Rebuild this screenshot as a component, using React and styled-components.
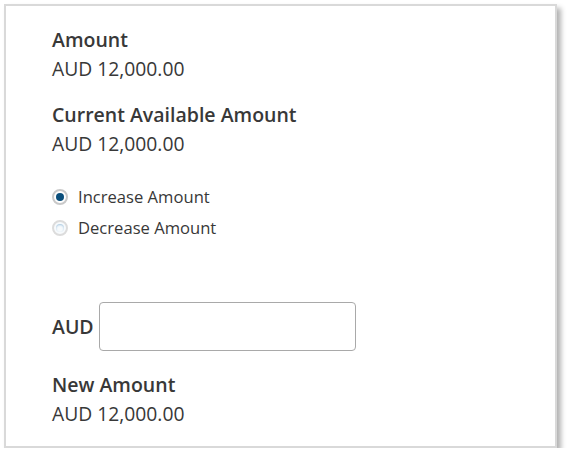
import React from 'react';
import styled, { createGlobalStyle } from 'styled-components';

const GlobalStyle = createGlobalStyle`
  body {
    margin: 0;
    background: #ffffff;
    font-family: "Open Sans", "Noto Sans", sans-serif;
    color: #383838;
  }
`

const Frame = styled.div`
  box-sizing: border-box;
  margin: 4px 0 0 4px;
  width: 553px;
  height: 444px;
  border: 2px solid #d9d9d9;
  background: #fff;
  box-shadow: 4px 4px 5px rgba(0, 0, 0, 0.3);
  padding: 20px 0 0 46px;
`

const Field = styled.div`
  margin-top: ${props => props.top || 0}px;
`

const Label = styled.div`
  font-size: 19.5px;
  font-weight: 600;
  line-height: 28px;
`

const Value = styled.div`
  font-size: 19.3px;
  line-height: 30px;
`

const RadioGroup = styled.div`
  display: flex;
  flex-direction: column;
  gap: 9px;
  margin-top: 27px;
`

const RadioRow = styled.label`
  display: flex;
  align-items: center;
  gap: 10px;
  font-size: 16.6px;
  line-height: 22px;
`

const Dot = styled.span`
  box-sizing: border-box;
  width: 16px;
  height: 16px;
  border-radius: 50%;
  border: 2px solid ${props => (props.checked ? '#c9c9c9' : '#dcdcdc')};
  background: ${props => (props.checked ? '#fff' : '#f7fafc')};
  display: flex;
  align-items: center;
  justify-content: center;

  &::after {
    content: '';
    width: 8px;
    height: 8px;
    border-radius: 50%;
    background: ${props => (props.checked ? '#0b4f7c' : 'transparent')};
    box-shadow: ${props => (props.checked ? 'none' : 'inset 0 1px 2px #a8c8e0')};
  }
`

const AmountRow = styled.div`
  display: flex;
  align-items: center;
  gap: 5px;
  margin-top: 63px;
`

const Input = styled.input`
  box-sizing: border-box;
  width: 257px;
  height: 49px;
  border: 1px solid #a9a9a9;
  border-radius: 4px;
  font-family: inherit;
  font-size: 16px;
  outline: none;
  padding: 0 8px;
`

export default function App() {
  return (
    <>
      <GlobalStyle />
      <Frame>
        <Field>
          <Label>Amount</Label>
          <Value>AUD 12,000.00</Value>
        </Field>
        <Field top={17}>
          <Label>Current Available Amount</Label>
          <Value>AUD 12,000.00</Value>
        </Field>
        <RadioGroup>
          <RadioRow>
            <Dot checked />
            Increase Amount
          </RadioRow>
          <RadioRow>
            <Dot />
            Decrease Amount
          </RadioRow>
        </RadioGroup>
        <AmountRow>
          <Label>AUD</Label>
          <Input type="text" />
        </AmountRow>
        <Field top={20}>
          <Label>New Amount</Label>
          <Value>AUD 12,000.00</Value>
        </Field>
      </Frame>
    </>
  );
}
